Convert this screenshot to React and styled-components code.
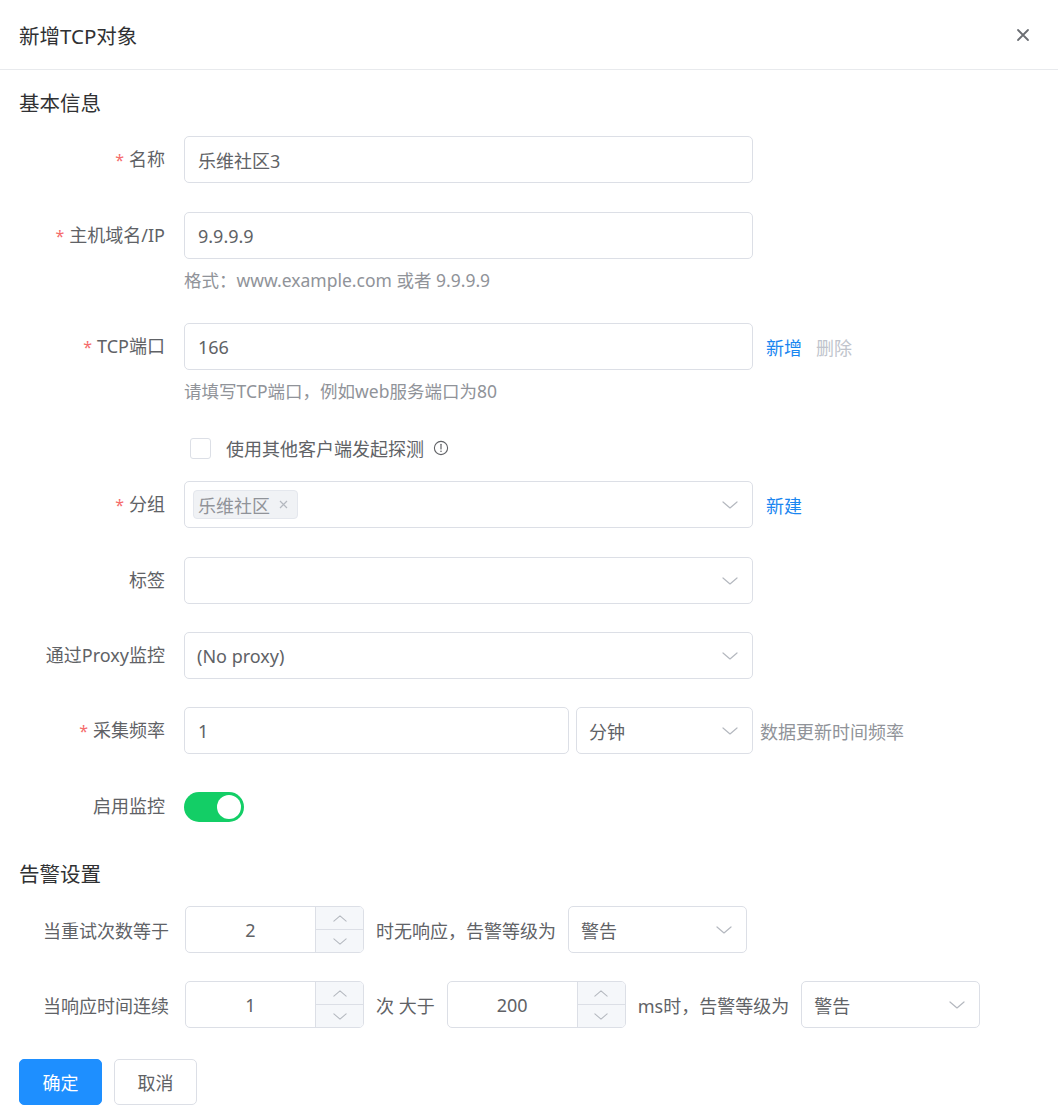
import React from 'react';
import styled, { createGlobalStyle } from 'styled-components';

const GlobalStyle = createGlobalStyle`
    * { box-sizing: border-box; }
    body {
        margin: 0;
        background: #ffffff;
        font-family: "Noto Sans", "Noto Sans CJK SC", sans-serif;
        color: #606266;
    }
`;

function Chevron({ up, down = !up, size = 16 }) {
    return (
        <svg width={size} height={size / 2} viewBox="0 0 16 8" fill="none">
            <polyline
                points={down ? "1,1 8,7 15,1" : "1,7 8,1 15,7"}
                stroke="#b4b8bf"
                strokeWidth="1.2"
                strokeLinecap="round"
                strokeLinejoin="round"
            />
        </svg>
    );
}

function Select({ value, width, tag }) {
    return (
        <SelectBox width={width}>
            {tag ? (
                <Tag>
                    {tag}
                    <svg width="9" height="9" viewBox="0 0 9 9">
                        <path d="M1 1 L8 8 M8 1 L1 8" stroke="#b4b8bf" strokeWidth="1.2" />
                    </svg>
                </Tag>
            ) : (
                <span>{value}</span>
            )}
            <Chevron />
        </SelectBox>
    );
}

function NumberInput({ value }) {
    return (
        <NumberBox>
            <NumberValue>{value}</NumberValue>
            <Steppers>
                <Step><Chevron up size={14} /></Step>
                <Step><Chevron size={14} /></Step>
            </Steppers>
        </NumberBox>
    );
}

function Field({ label, required, help, children }) {
    return (
        <FormItem>
            <Label>
                {required && <Star>*</Star>}
                {label}
            </Label>
            <FieldBody>
                <Line>{children}</Line>
                {help && <Help>{help}</Help>}
            </FieldBody>
        </FormItem>
    );
}

export default function App() {
    return (
        <Dialog>
            <GlobalStyle />
            <Header>
                <Title>新增TCP对象</Title>
                <Close>
                    <svg width="14" height="14" viewBox="0 0 14 14">
                        <path d="M2 2 L12 12 M12 2 L2 12" stroke="#6b6e73" strokeWidth="1.8" strokeLinecap="round" />
                    </svg>
                </Close>
            </Header>
            <Body>
                <SectionTitle>基本信息</SectionTitle>

                <Field label="名称" required>
                    <Input>乐维社区3</Input>
                </Field>
                <Field label="主机域名/IP" required help="格式：www.example.com 或者 9.9.9.9">
                    <Input>9.9.9.9</Input>
                </Field>
                <Field label="TCP端口" required help="请填写TCP端口，例如web服务端口为80">
                    <Input>166</Input>
                    <LinkText>新增</LinkText>
                    <LinkText disabled>删除</LinkText>
                </Field>

                <CheckRow>
                    <Checkbox />
                    <span>使用其他客户端发起探测</span>
                    <svg width="16" height="16" viewBox="0 0 16 16" fill="none">
                        <circle cx="8" cy="8" r="6.6" stroke="#606266" strokeWidth="1.1" />
                        <path d="M8 4.3 V9" stroke="#606266" strokeWidth="1.2" strokeLinecap="round" />
                        <circle cx="8" cy="11.2" r="0.8" fill="#606266" />
                    </svg>
                </CheckRow>

                <Field label="分组" required>
                    <Select tag="乐维社区" />
                    <LinkText>新建</LinkText>
                </Field>
                <Field label="标签">
                    <Select value="" />
                </Field>
                <Field label="通过Proxy监控">
                    <Select value="(No proxy)" />
                </Field>
                <Field label="采集频率" required>
                    <Input width={385}>1</Input>
                    <Select value="分钟" width={177} />
                    <Hint>数据更新时间频率</Hint>
                </Field>
                <Field label="启用监控">
                    <Switch on />
                </Field>

                <SectionTitle alarm>告警设置</SectionTitle>

                <AlarmRow>
                    <AlarmLabel>当重试次数等于</AlarmLabel>
                    <NumberInput value="2" />
                    <span>时无响应，告警等级为</span>
                    <Select value="警告" width={179} />
                </AlarmRow>
                <AlarmRow>
                    <AlarmLabel>当响应时间连续</AlarmLabel>
                    <NumberInput value="1" />
                    <span>次 大于</span>
                    <NumberInput value="200" />
                    <span>ms时，告警等级为</span>
                    <Select value="警告" width={179} />
                </AlarmRow>

                <Footer>
                    <Button primary>确定</Button>
                    <Button>取消</Button>
                </Footer>
            </Body>
        </Dialog>
    );
}

// ---------- styled ----------
const Dialog = styled.div`
    width: 1058px;
    min-height: 1117px;
    background: #ffffff;
`;
const Header = styled.div`
    height: 70px;
    padding: 0 19px;
    border-bottom: 1px solid #e8eaed;
    display: flex;
    align-items: center;
    justify-content: space-between;
`;
const Title = styled.div`
    font-size: 20.5px;
    color: #303133;
`;
const Close = styled.div`
    width: 20px;
    height: 20px;
    margin-right: 6px;
    display: flex;
    align-items: center;
    justify-content: center;
`;
const Body = styled.div`
    padding: 0 19px 15px 19px;
`;
const SectionTitle = styled.div`
    height: 30px;
    line-height: 30px;
    font-size: 20.5px;
    color: #303133;
    margin-top: ${p => (p.alarm ? '29px' : '18px')};
    margin-bottom: ${p => (p.alarm ? '17px' : '18px')};
`;
const FormItem = styled.div`
    display: flex;
    margin-bottom: 28px;
    font-size: 18px;
`;
const Label = styled.label`
    width: 165px;
    flex-shrink: 0;
    padding-right: 19px;
    text-align: right;
    line-height: 47px;
    color: #606266;
`;
const Star = styled.span`
    color: #f56c6c;
    margin-right: 5px;
    font-size: 16px;
`;
const FieldBody = styled.div`
    display: flex;
    flex-direction: column;
`;
const Line = styled.div`
    display: flex;
    align-items: center;
    min-height: 47px;
    gap: 7px;
`;
const Help = styled.div`
    margin-top: 10px;
    margin-bottom: 4px;
    line-height: 22px;
    color: #909399;
    font-size: 17.5px;
`;
const Input = styled.div`
    width: ${p => p.width || 569}px;
    height: 47px;
    border: 1px solid #dcdfe6;
    border-radius: 5px;
    padding: 0 13px;
    display: flex;
    align-items: center;
    color: #606266;
`;
const SelectBox = styled(Input)`
    width: ${p => p.width || 569}px;
    padding: 0 14px 0 8px;
    justify-content: space-between;

    & > span {
        padding-left: 4px;
    }
`;
const Tag = styled.span`
    height: 29px;
    padding: 0 9px 0 6px;
    border: 1px solid #e4e7ed;
    border-radius: 4px;
    background: #f0f2f5;
    color: #909399;
    display: inline-flex;
    align-items: center;
    gap: 9px;
`;
const LinkText = styled.span`
    color: ${p => (p.disabled ? '#c0c4cc' : '#1a86f0')};
    margin-left: ${p => (p.disabled ? '7px' : '6px')};
    cursor: pointer;
`;
const Hint = styled.span`
    color: #909399;
`;
const CheckRow = styled.div`
    display: flex;
    align-items: center;
    height: 28px;
    margin: 0 0 19px 165px;
    gap: 9px;
    font-size: 18px;
    color: #606266;

    & > span {
        margin-left: 6px;
    }
`;
const Checkbox = styled.span`
    width: 21px;
    height: 21px;
    border: 1px solid #dcdfe6;
    border-radius: 3px;
    background: #fff;
`;
const Switch = styled.span`
    position: relative;
    width: 60px;
    height: 30px;
    border-radius: 15px;
    background: ${p => (p.on ? '#13ce66' : '#dcdfe6')};

    &::after {
        content: '';
        position: absolute;
        top: 3px;
        left: ${p => (p.on ? '33px' : '3px')};
        width: 24px;
        height: 24px;
        border-radius: 50%;
        background: #fff;
    }
`;
const AlarmRow = styled.div`
    display: flex;
    align-items: center;
    gap: 12px;
    margin-bottom: 28px;
    padding-left: 24px;
    font-size: 18px;
    color: #606266;

    & + & {
        margin-bottom: 31px;
    }
`;
const AlarmLabel = styled.span`
    margin-right: 4px;
`;
const NumberBox = styled.div`
    width: 179px;
    height: 47px;
    border: 1px solid #dcdfe6;
    border-radius: 5px;
    display: flex;
    overflow: hidden;
`;
const NumberValue = styled.div`
    flex: 1;
    display: flex;
    align-items: center;
    justify-content: center;
    color: #606266;
`;
const Steppers = styled.div`
    width: 48px;
    border-left: 1px solid #dcdfe6;
    background: #f5f7fa;
    display: flex;
    flex-direction: column;
`;
const Step = styled.div`
    flex: 1;
    display: flex;
    align-items: center;
    justify-content: center;

    & + & {
        border-top: 1px solid #dcdfe6;
    }
`;
const Footer = styled.div`
    display: flex;
    gap: 12px;
`;
const Button = styled.button`
    width: 83px;
    height: 46px;
    border-radius: 5px;
    font-family: inherit;
    font-size: 18px;
    border: 1px solid ${p => (p.primary ? '#1e8fff' : '#dcdfe6')};
    background: ${p => (p.primary ? '#1e8fff' : '#ffffff')};
    color: ${p => (p.primary ? '#ffffff' : '#606266')};
`;
